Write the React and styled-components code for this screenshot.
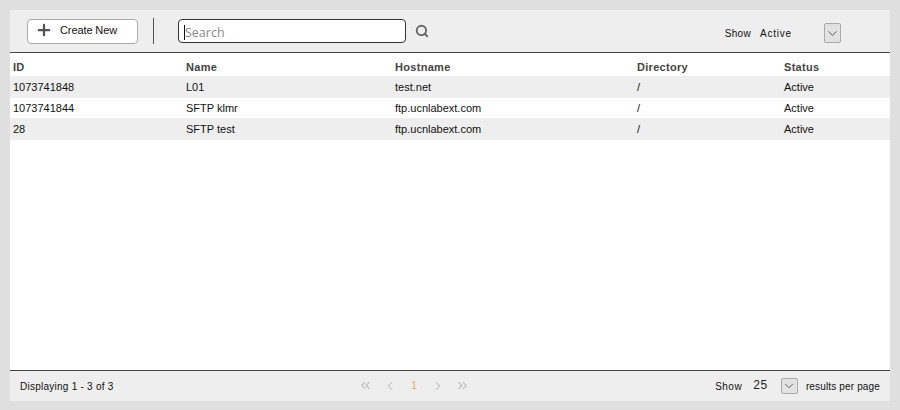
import React from 'react';
import styled, { createGlobalStyle } from 'styled-components';
import { ChevronDown, ChevronLeft, ChevronRight, ChevronsLeft, ChevronsRight, Plus, Search } from 'lucide-react';

const GlobalStyle = createGlobalStyle`
  html, body {
    margin: 0;
    padding: 0;
    background: #dfdfdf;
    font-family: "Liberation Sans", Arial, sans-serif;
  }
`;

const Page = styled.div`
  width: 900px;
  height: 410px;
  box-sizing: border-box;
  padding: 10px 10px 9px;
  background: #dfdfdf;
`;

const Panel = styled.div`
  height: 100%;
  display: flex;
  flex-direction: column;
  background: #fff;
`;

const Toolbar = styled.div`
  height: 43px;
  box-sizing: border-box;
  flex: none;
  display: flex;
  align-items: center;
  padding: 0 49px 0 17px;
  background: #eee;
  border-bottom: 1px solid #444;
`;

const CreateButton = styled.button`
  width: 111px;
  height: 25px;
  box-sizing: border-box;
  display: flex;
  align-items: center;
  gap: 7px;
  padding: 0 0 3px 7px;
  background: #fff;
  border: 1px solid #aaa;
  border-radius: 4px;
  color: #111;
  font: 11px "Liberation Sans", Arial, sans-serif;
  letter-spacing: -0.1px;
`;

const Divider = styled.div`
  width: 1px;
  height: 26px;
  margin: 0 24px 0 15px;
  background: #555;
`;

const SearchBox = styled.div`
  width: 228px;
  height: 24px;
  box-sizing: border-box;
  display: flex;
  align-items: center;
  padding: 2px 0 0 5px;
  background: #fff;
  border: 1px solid #333;
  border-radius: 4px;
  color: #8a8a8a;
  font: 12.5px "Open Sans", sans-serif;
`;

const Caret = styled.span`
  width: 1px;
  height: 15px;
  background: #111;
`;

const SearchIcon = styled(Search)`
  margin-left: 9px;
  color: #666;
`;

const Spacer = styled.div`
  flex: 1;
`;

const ShowGroup = styled.div`
  display: flex;
  align-items: center;
  padding-top: 4px;
`;

const Label = styled.span`
  color: #111;
  font-size: 10px;
  letter-spacing: ${(p) => p.$spacing ?? 0.25}px;
  margin-left: ${(p) => p.$before || 0}px;
  margin-right: ${(p) => p.$gap || 0}px;
`;

const SelectArrow = styled.div`
  width: 17px;
  height: ${(p) => p.$height}px;
  box-sizing: border-box;
  display: flex;
  align-items: center;
  justify-content: center;
  margin-bottom: ${(p) => p.$lift || 0}px;
  background: #e2e2e2;
  border: 1px solid #aaa;
  border-radius: 2px;
  color: #444;
`;

const Table = styled.div`
  flex: 1;
  padding-top: 3px;
`;

const Row = styled.div`
  height: ${(p) => p.$height}px;
  box-sizing: border-box;
  display: grid;
  grid-template-columns: 173px 209px 242px 147px 1fr;
  align-items: center;
  padding-left: 3px;
  padding-top: ${(p) => p.$nudge || 0}px;
  background: ${(p) => (p.$shaded ? '#eee' : '#fff')};
  color: #111;
  font-size: 11px;
`;

const HeadCell = styled.div`
  color: #444;
  font-weight: bold;
  letter-spacing: 0.3px;
`;

const Footer = styled.div`
  height: 31px;
  box-sizing: border-box;
  flex: none;
  position: relative;
  display: flex;
  align-items: center;
  padding: 1px 10px 0;
  background: #eee;
  border-top: 1px solid #444;
`;

const Pager = styled.div`
  position: absolute;
  left: 348px;
  top: 7px;
  display: flex;
  align-items: center;
  gap: 10px;
  color: #bdbdbd;
`;

const PageNumber = styled.span`
  width: 14px;
  text-align: center;
  color: #e9a55a;
  font-size: 10px;
`;

const PageSize = styled.span`
  color: #222;
  font-size: 12px;
  letter-spacing: 0.7px;
  margin: 0 13px 3px 11px;
`;

const columns = ['ID', 'Name', 'Hostname', 'Directory', 'Status'];

const rows = [
  ['1073741848', 'L01', 'test.net', '/', 'Active'],
  ['1073741844', 'SFTP klmr', 'ftp.ucnlabext.com', '/', 'Active'],
  ['28', 'SFTP test', 'ftp.ucnlabext.com', '/', 'Active'],
];

export default function App() {
  return (
    <Page>
      <GlobalStyle />
      <Panel>
        <Toolbar>
          <CreateButton>
            <Plus size={18} color="#555" strokeWidth={3} />
            Create New
          </CreateButton>
          <Divider />
          <SearchBox>
            <Caret />
            Search
          </SearchBox>
          <SearchIcon size={14} strokeWidth={3.2} />
          <Spacer />
          <ShowGroup>
            <Label $spacing={0.3} $gap={9}>Show</Label>
            <Label $spacing={0.8} $gap={32}>Active</Label>
            <SelectArrow $height={20}>
              <ChevronDown size={15} strokeWidth={1.4} />
            </SelectArrow>
          </ShowGroup>
        </Toolbar>
        <Table>
          <Row $height={20} $nudge={1}>
            {columns.map((c) => (
              <HeadCell key={c}>{c}</HeadCell>
            ))}
          </Row>
          {rows.map((r, i) => (
            <Row key={r[0]} $height={i === 1 ? 20 : 22} $shaded={i !== 1}>
              {r.map((v, j) => (
                <div key={j}>{v}</div>
              ))}
            </Row>
          ))}
        </Table>
        <Footer>
          <Label>Displaying 1 - 3 of 3</Label>
          <Pager>
            <ChevronsLeft size={15} strokeWidth={1.8} />
            <ChevronLeft size={14} strokeWidth={1.8} />
            <PageNumber>1</PageNumber>
            <ChevronRight size={14} strokeWidth={1.8} />
            <ChevronsRight size={15} strokeWidth={1.8} />
          </Pager>
          <Spacer />
          <Label $spacing={0.5}>Show</Label>
          <PageSize>25</PageSize>
          <SelectArrow $height={16} $lift={1}>
            <ChevronDown size={14} strokeWidth={1.4} />
          </SelectArrow>
          <Label $spacing={0.15} $before={8}>results per page</Label>
        </Footer>
      </Panel>
    </Page>
  );
}
